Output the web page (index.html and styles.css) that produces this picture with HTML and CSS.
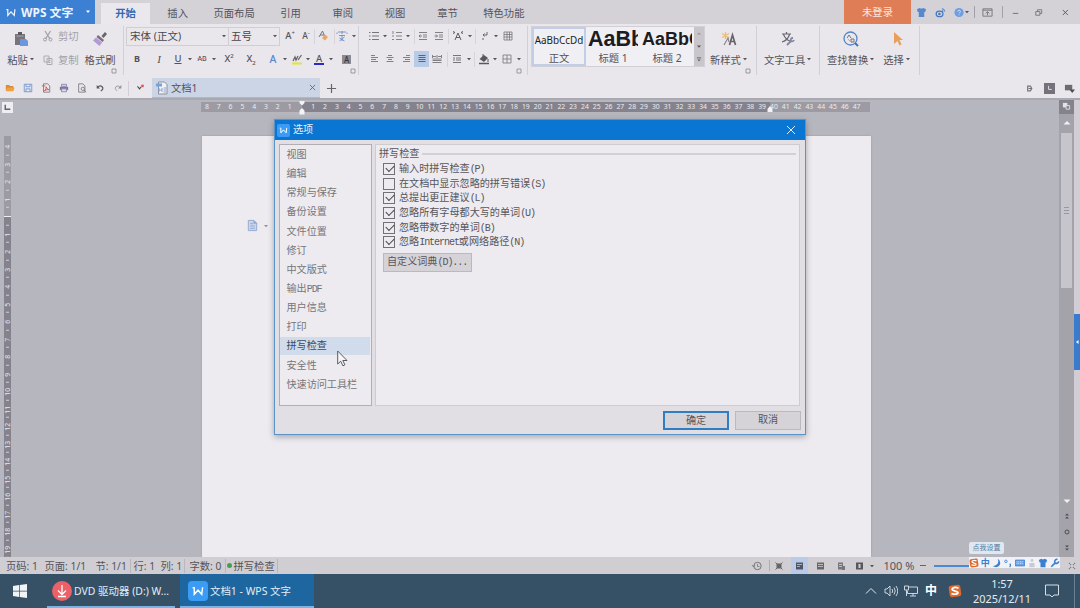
FILE: index.html
```html
<!DOCTYPE html>
<html lang="zh-CN">
<head>
    <meta charset="UTF-8">
    <meta name="viewport" content="width=device-width, initial-scale=1.0">
    <title>文档1 - WPS 文字</title>
    <link rel="stylesheet" href="styles.css">
</head>
<body>

    <svg class="defs">
        <symbol id="caret" viewBox="0 0 6 4"><path d="M1 1h4L3 3.2z" fill="#55545a"/></symbol>
        <symbol id="launch" viewBox="0 0 6 6"><path d="M1 1h4v4H1z" fill="none" stroke="#8a888e" stroke-width=".8"/></symbol>
        <symbol id="wlogo" viewBox="0 0 14 12"><path d="M.5 2H2.500v8L7 5l4.500 5 1-8.500" fill="none" stroke="currentColor" stroke-width="1.700"/></symbol>
        <symbol id="sogou" viewBox="0 0 12 12"><rect x="1" y="1" width="10" height="10" rx="2" transform="rotate(-8 6 6)" fill="#e06a2c"/><path d="M9 3.500C6 2.500 3.500 3 3.500 4.600S8.500 6 8.500 7.500 5.500 9 3 8.200" fill="none" stroke="#fff" stroke-width="1.500"/></symbol>
        <symbol id="shirt" viewBox="0 0 12 12"><path d="M1 2.500l3-1.500q2 1.500 4 0l3 1.500-1 3H9V11H3V5.500H2z"/></symbol>
    </svg>

    <header class="titlebar">
        <div class="brand">
            <svg class="brand-logo"><use href="#wlogo"/></svg>
            <b>WPS 文字</b>
            <svg class="brand-arrow" viewBox="0 0 6 4"><path d="M1 .5h4L3 3z" fill="#fff"/></svg>
        </div>
        <nav class="tabs">
            <span class="tab active">开始</span>
            <span class="tab">插入</span>
            <span class="tab wide">页面布局</span>
            <span class="tab">引用</span>
            <span class="tab">审阅</span>
            <span class="tab">视图</span>
            <span class="tab">章节</span>
            <span class="tab wide">特色功能</span>
        </nav>
        <div class="login">未登录</div>
        <div class="window-tools">
            <svg class="ic blue-fill" viewBox="0 0 12 12"><use href="#shirt"/></svg>
            <svg class="ic weibo" viewBox="0 0 12 12"><ellipse cx="5" cy="7.500" rx="3.700" ry="3" fill="none" stroke="#4179c2" stroke-width="1.400"/><circle cx="4.800" cy="7.600" r="1.400" fill="#4179c2"/><path d="M7.500 2q3-.5 3 3M7.800 3.800q1.200 0 1 1.200" fill="none" stroke="#4179c2"/></svg>
            <svg class="ic help" viewBox="0 0 12 12"><circle cx="5.500" cy="6" r="5" fill="#6e9ee2"/><path d="M4 5q0-1.500 1.500-1.500T7 5t-1.500 1.500M5.500 8v1" fill="none" stroke="#c9dcf6"/></svg>
            <svg class="caret"><use href="#caret"/></svg>
            <i class="tool-sep"></i>
            <svg class="ic tool-up" viewBox="0 0 12 12"><path d="M1 2h10v8H1zM1 3.500h10M6 9V5.500M4 7l2-2 2 2" fill="none" stroke="#77757b"/></svg>
            <i class="tool-sep far"></i>
            <svg class="ic win-min" viewBox="0 0 12 12"><path d="M3 7h6" stroke="#6f6d73"/></svg>
            <svg class="ic win-res" viewBox="0 0 12 12"><path d="M3 5h4.500v4H3zM5 5V3h4.500v4H7.500" fill="none" stroke="#6f6d73" stroke-width=".9"/></svg>
            <svg class="ic win-close" viewBox="0 0 12 12"><path d="M3 3.200l5.600 5.600M8.600 3.200L3 8.800" stroke="#59575d"/></svg>
        </div>
    </header>

    <section class="ribbon">
        <div class="group clip">
            <div class="big paste">
                <svg class="big-icon" viewBox="0 0 16 16"><path d="M2 3h10v11H2z" fill="#77747c"/><path d="M5 1h4v3H5z" fill="#5c5a62"/><path d="M3.500 5h7" stroke="#aaa8af"/><path d="M7 8h6l2 2v5H7z" fill="#6b97dc"/></svg>
                <span>粘贴<svg class="caret"><use href="#caret"/></svg></span>
            </div>
            <div class="small-stack">
                <span><svg class="ic" viewBox="0 0 12 12"><path d="M3 1l5 8M8.500 1l-5 8" stroke="#a19fa6" stroke-width="1.200"/><circle cx="3" cy="9.500" r="1.500" fill="none" stroke="#a19fa6"/><circle cx="8.500" cy="9.500" r="1.500" fill="none" stroke="#a19fa6"/></svg>剪切</span>
                <span><svg class="ic" viewBox="0 0 12 12"><path d="M2 2h5v6H2zM5 4.500h5v6H5zM6.500 6.500h2M6.500 8.500h2" fill="#e9e7eb" stroke="#acaab0"/></svg>复制</span>
            </div>
            <div class="big brush">
                <svg class="big-icon" viewBox="0 0 16 16"><path d="M9.500 5l3.500-4 2 2-3.500 4z" fill="#68636c"/><path d="M6 4l6 5-1.500 2-6-5z" fill="#777079"/><path d="M4 6.500l6.200 5L7.500 15 1 9.500z" fill="#b29ad9"/></svg>
                <span>格式刷</span>
            </div>
            <svg class="launch"><use href="#launch"/></svg>
        </div>

        <div class="group font">
            <div class="row font-row1">
                <div class="combo family">宋体 (正文)<svg class="caret"><use href="#caret"/></svg></div>
                <div class="combo size">五号<svg class="caret"><use href="#caret"/></svg></div>
                <span class="glyph g3">A<sup>+</sup></span>
                <span class="glyph g2 shrink">A<sup>-</sup></span>
                <i class="mini-sep g1"></i>
                <svg class="ic g2" viewBox="0 0 12 12"><path d="M2 7l3.500-6L8 7M3 5h4" fill="none" stroke="#77757b"/><path d="M5 8l3-3.500 3 2.500-3 3.500z" fill="#e7a66c"/></svg>
                <i class="mini-sep g5"></i>
                <svg class="ic g1" viewBox="0 0 12 12"><path d="M2 2h8M6 1v3M1 4V2.500M11 4V2.500M3 5.500h6M6 5v6M3.500 8l5 3M8.500 7l-5 4" fill="none" stroke="#6d8fc4" stroke-width=".9"/></svg>
                <svg class="caret g3"><use href="#caret"/></svg>
            </div>
            <div class="row font-row2">
                <span class="glyph bold">B</span>
                <span class="glyph ital g8">I</span>
                <span class="glyph under g5">U</span>
                <svg class="caret g2"><use href="#caret"/></svg>
                <span class="glyph strike g2">AB</span>
                <svg class="caret g2"><use href="#caret"/></svg>
                <span class="glyph g5">X<sup>2</sup></span>
                <span class="glyph g8">X<sub>2</sub></span>
                <span class="glyph outline g8">A</span>
                <svg class="caret g2"><use href="#caret"/></svg>
                <svg class="ic g3" viewBox="0 0 12 12"><path d="M1 9.500h10v2H1z" fill="#e4e52c"/><path d="M2 8l2-4 1 3 2-4M7 7l3.500-5" stroke="#67656b" fill="none" stroke-width="1.300"/></svg>
                <svg class="caret g2"><use href="#caret"/></svg>
                <span class="glyph fontcolor g3">A</span>
                <svg class="caret g4"><use href="#caret"/></svg>
                <span class="glyph shade g8">A</span>
            </div>
            <svg class="launch"><use href="#launch"/></svg>
        </div>

        <div class="group para">
            <div class="row">
                <svg class="ic" viewBox="0 0 12 12"><path d="M4 2.500h7M4 6h7M4 9.500h7M1 2.500h1.500M1 6h1.500M1 9.500h1.500" stroke="#77757b"/></svg>
                <svg class="caret g2"><use href="#caret"/></svg>
                <svg class="ic g3" viewBox="0 0 12 12"><path d="M5 2.500h6M5 6h6M5 9.500h6M2 1v3M1 6h2M1 9.500h2" stroke="#85838a"/></svg>
                <svg class="caret g2"><use href="#caret"/></svg>
                <i class="mini-sep g3"></i>
                <svg class="ic g2" viewBox="0 0 12 12"><path d="M2 2.500h8M6 5h4M6 7h4M2 9.500h8M5 6H2M3.500 4.500L2 6l1.500 1.500" fill="none" stroke="#77757b" stroke-width=".9"/></svg>
                <svg class="ic g4" viewBox="0 0 12 12"><path d="M2 2.500h8M6 5h4M6 7h4M2 9.500h8M1.500 6h3M3 4.500L4.500 6 3 7.500" fill="none" stroke="#77757b" stroke-width=".9"/></svg>
                <i class="mini-sep g3"></i>
                <svg class="ic g3" viewBox="0 0 12 12"><path d="M3 10l3-7 3 7M4 7.500h4M1 1.500l2 1-2 1M11 1.500l-2 1 2 1" fill="none" stroke="#5f5d63"/></svg>
                <svg class="caret g3"><use href="#caret"/></svg>
                <i class="mini-sep g2"></i>
                <svg class="ic g3" viewBox="0 0 12 12"><path d="M8 2v3H4M5.500 3.500L4 5l1.500 1.500M3 9h2" fill="none" stroke="#67656b"/></svg>
                <svg class="caret g2"><use href="#caret"/></svg>
                <svg class="ic g3" viewBox="0 0 12 12"><path d="M2 2h8v8H2zM2 4.500h8M2 7h8M5 2v8M7.500 2v8" fill="none" stroke="#77757b" stroke-width=".8"/></svg>
            </div>
            <div class="row">
                <svg class="ic" viewBox="0 0 12 12"><path d="M3 2.500h4M3 4.500h7M3 6.500h5M3 8.500h7" stroke="#77757b" stroke-width=".9"/></svg>
                <svg class="ic g4" viewBox="0 0 12 12"><path d="M4 2.500h4M2.500 4.500h7M4 6.500h4M2.500 8.500h7" stroke="#77757b" stroke-width=".9"/></svg>
                <svg class="ic g4" viewBox="0 0 12 12"><path d="M6 2.500h4M3 4.500h7M5 6.500h5M3 8.500h7" stroke="#77757b" stroke-width=".9"/></svg>
                <span class="pressed g2"><svg class="ic" viewBox="0 0 12 12"><path d="M2.500 2.500h7M2.500 4.500h7M2.500 6.500h7M2.500 8.500h7" stroke="#55647c"/></svg></span>
                <svg class="ic g2" viewBox="0 0 12 12"><path d="M1.500 2v3M10.500 2v3M2 3.500h3M7 3.500h3M6 2v3M1.500 6h9M1.500 7.500h9M1.500 9.500h9" stroke="#77757b" stroke-width=".9"/></svg>
                <i class="mini-sep g4"></i>
                <svg class="ic g3" viewBox="0 0 12 12"><path d="M2 2.500h8M5 5h5M5 7h5M2 9.500h8M3 4v4" stroke="#77757b"/></svg>
                <svg class="caret g3"><use href="#caret"/></svg>
                <i class="mini-sep g2"></i>
                <svg class="ic g3" viewBox="0 0 12 12"><path d="M6 2L1.500 6 6 9l4-4z" fill="#59575d"/><path d="M1 10.500h10" stroke="#59575d" stroke-width="1.500"/><path d="M5 1v3M10 6v3" stroke="#59575d"/></svg>
                <svg class="caret g2"><use href="#caret"/></svg>
                <svg class="ic g3" viewBox="0 0 12 12"><path d="M2 2h8v8H2zM2 6h8M6 2v8" fill="none" stroke="#77757b" stroke-width=".8"/></svg>
                <svg class="caret g3"><use href="#caret"/></svg>
            </div>
            <svg class="launch"><use href="#launch"/></svg>
        </div>

        <div class="group styles">
            <div class="gallery">
                <div class="style-item selected"><div class="sample">AaBbCcDd</div><span>正文</span></div>
                <div class="style-item"><div class="sample h1">AaBb</div><span>标题 1</span></div>
                <div class="style-item"><div class="sample h2">AaBbC</div><span>标题 2</span></div>
                <div class="gallery-scroll">
                    <svg viewBox="0 0 6 4"><path d="M1 3h4L3 1z" fill="#9a989e"/></svg>
                    <svg><use href="#caret"/></svg>
                    <svg viewBox="0 0 6 6"><path d="M.5 1h5" stroke="#55545a"/><path d="M1 3h4L3 5z" fill="#55545a"/></svg>
                </div>
            </div>
            <div class="big newstyle">
                <svg class="big-icon" viewBox="0 0 16 16"><path d="M4.500 1v7M1 2.500l7 4.500M1 6.500l7-4" stroke="#edbd72" stroke-width="1.300"/><path d="M8.500 14l3-10 3 10M9.500 10.500h4" fill="none" stroke="#67656b" stroke-width="1.700"/><path d="M3 14l4-7 1 4" fill="none" stroke="#8a8890" stroke-width="1.200"/></svg>
                <span>新样式<svg class="caret"><use href="#caret"/></svg></span>
            </div>
            <svg class="launch"><use href="#launch"/></svg>
        </div>

        <div class="group tools">
            <div class="big">
                <svg class="big-icon" viewBox="0 0 16 16"><path d="M2 3h9M6.500 1v2M3.500 3.500Q6 9 10 10M9.500 3.500Q8 9 2 11" fill="none" stroke="#68666d" stroke-width="1.200"/><path d="M7 14l4-4a2 2 0 0 1 2-3M11 10a2 2 0 0 0 3-1" fill="none" stroke="#8287a0" stroke-width="1.800"/></svg>
                <span>文字工具<svg class="caret"><use href="#caret"/></svg></span>
            </div>
        </div>

        <div class="group edit">
            <div class="big">
                <svg class="big-icon" viewBox="0 0 16 16"><circle cx="7.500" cy="7.500" r="6.500" fill="none" stroke="#5088cb" stroke-width="1.300"/><path d="M12 12l3 3" stroke="#3f74b8" stroke-width="2"/><path d="M4 7l2-3 2 3M8 8h3v3H8z" fill="none" stroke="#77757b"/><path d="M5 8q1 2 2.500 2" fill="none" stroke="#dfa467"/></svg>
                <span>查找替换<svg class="caret"><use href="#caret"/></svg></span>
            </div>
            <div class="big select">
                <svg class="big-icon" viewBox="0 0 16 16"><path d="M5 1l9 8H10.500l2 4.500-2 1-2-4.500L5 13z" fill="#e7a05b"/></svg>
                <span>选择<svg class="caret"><use href="#caret"/></svg></span>
            </div>
        </div>
    </section>

    <section class="docbar">
        <div class="quick">
            <svg class="ic" viewBox="0 0 12 12"><path d="M1 2.500h4l1 1h4V6H3l-2 4z" fill="#d98b35"/><path d="M3 5.500h8.500L10 10H1z" fill="#f0a03e"/></svg>
            <svg class="ic" viewBox="0 0 12 12"><path d="M1.500 1.500h9v9h-9zM3.500 1.500v3h5v-3M3.500 10.500V7h5v3.500" fill="none" stroke="#6b93cf"/></svg>
            <svg class="ic" viewBox="0 0 12 12"><path d="M3 1h5l2.500 2.500V11H3z" fill="none" stroke="#77757b"/><path d="M1 3.500h4M4 9.500q3-2 2-5 1 3 3.500 3.500-3-.5-5.500 1.500" fill="none" stroke="#cf4f4f"/></svg>
            <svg class="ic" viewBox="0 0 12 12"><path d="M1 4.500h10v4H1z" fill="#7b7996"/><path d="M3 1.500h6V4H3zM3 7h6v3.500H3z" fill="#d9d8e8" stroke="#8682ae"/></svg>
            <svg class="ic" viewBox="0 0 12 12"><path d="M2 1h5l2.500 2.500V11H2z" fill="none" stroke="#77757b"/><circle cx="7" cy="7" r="2" fill="#e9e7eb" stroke="#77757b"/><path d="M8.500 8.500L11 11" stroke="#77757b"/></svg>
            <svg class="ic" viewBox="0 0 12 12"><path d="M3.500 5Q6 2 8.500 4.500T7 9.500" fill="none" stroke="#5b595f" stroke-width="1.500"/><path d="M2 2.500v4h4z" fill="#5b595f"/></svg>
            <svg class="ic" viewBox="0 0 12 12"><path d="M8.500 5Q6 2 3.500 4.500T5 9.500" fill="none" stroke="#929097"/><path d="M10 2.500v4H6z" fill="#929097"/></svg>
            <i class="quick-sep"></i>
            <svg class="ic" viewBox="0 0 12 12"><path d="M3 4l2.500 3 2-2.500" fill="none" stroke="#49474d" stroke-width="1.300"/><path d="M7.500 2h3v3h-3z" fill="#e05454"/></svg>
        </div>
        <div class="doc-tab">
            <svg class="doc-icon" viewBox="0 0 12 14"><path d="M3 1h6l2.500 2.500V13H3z" fill="#f2f2f6" stroke="#8b919e"/><path d="M.5 2.500h6v3h-6z" fill="#75a2d8"/><path d="M3.500 7v4M6.500 7v4M3.500 9h3M8 7h2.500M8 9h2.500M8 11h2.500" stroke="#7aa0cd" stroke-width=".9"/></svg>
            <span>文档1</span>
            <svg class="tab-close" viewBox="0 0 8 8"><path d="M1 1l6 6M7 1L1 7" stroke="#66646c"/></svg>
        </div>
        <svg class="tab-add" viewBox="0 0 12 12"><path d="M1 6h10M6 1v10" stroke="#66646a" stroke-width="1.300"/></svg>
        <div class="doc-tools">
            <svg class="ic" viewBox="0 0 12 12"><path d="M4 3.500h3l1.500 2.500L7 8.500H4z" fill="none" stroke="#77757b" stroke-width="1.300"/><path d="M5 6h3" stroke="#66646a"/></svg>
            <svg class="ic" viewBox="0 0 12 12"><path d="M0 0h12v12H0z" fill="#74727a"/><path d="M5 3v4h3.500" fill="none" stroke="#e9e7eb"/></svg>
            <svg class="ic" viewBox="0 0 12 12"><path d="M1 2h8v6H1z" fill="#6d6b72"/><path d="M6 7h6l-3 4z" fill="#4f4d53"/></svg>
        </div>
    </section>

    <main class="workspace">
        <div class="left-rail">
            <div class="tab-type"><svg viewBox="0 0 8 8"><path d="M2 1.500v4h4.500" fill="none" stroke="#66646a" stroke-width="1.300"/></svg></div>
            <div class="v-ruler" id="vRuler"></div>
        </div>
        <div class="doc-area">
            <div class="h-ruler" id="hRuler">
                <svg class="indent first" viewBox="0 0 6 14"><path d="M.5 0h5v2L3 4.500.5 2zM3 7l2.500 2.500v4h-5v-4z" fill="#f4f3f6"/></svg>
                <svg class="indent last" viewBox="0 0 6 14"><path d="M3 5l2.500 3v3h-5V8z" fill="#f4f3f6"/></svg>
            </div>
            <div class="page">
                <svg class="para-icon" viewBox="0 0 12 14"><path d="M1.500 1.500h6l3 3v8h-9z" fill="#cbd6ea" stroke="#91a7d0"/><path d="M3.500 5h3M3.500 7.500h5M3.500 10h5" stroke="#91a7d0"/><path d="M7 1l4 4H7z" fill="#91a7d0"/></svg>
                <svg class="caret"><use href="#caret"/></svg>
            </div>
        </div>
        <div class="scrollbar">
            <div class="nav-box"><svg viewBox="0 0 10 10"><path d="M1 1h5v5H1z" fill="#e2e1e6"/><path d="M4.500 4h4v4h-4z" fill="#85838b" stroke="#e2e1e6"/></svg></div>
            <svg class="arrow" viewBox="0 0 8 5"><path d="M.5 4.500L4 1l3.500 3.500z" fill="#f0eff3"/></svg>
            <div class="thumb"><i></i><i></i><i></i></div>
            <svg class="arrow down" viewBox="0 0 8 5"><path d="M.5.5L4 4 7.500.5z" fill="#f0eff3"/></svg>
            <div class="jump">
                <svg viewBox="0 0 6 6"><path d="M1 2.500L3 .5l2 2zM1 5.500l2-2 2 2z" fill="#4d4b52"/></svg>
                <svg viewBox="0 0 6 6"><circle cx="3" cy="3" r="2" fill="none" stroke="#4d4b52"/></svg>
                <svg viewBox="0 0 6 6"><path d="M1 .5l2 2 2-2zM1 3.500l2 2 2-2z" fill="#4d4b52"/></svg>
            </div>
        </div>
        <div class="side-strip"><div class="side-handle"><svg viewBox="0 0 4 6"><path d="M3.500 1v4L1 3z" fill="#fff"/></svg></div></div>
    </main>

    <footer class="statusbar">
        <span class="st-page">页码: 1</span>
        <span class="st-face">页面: 1/1</span>
        <span class="st-sec">节: 1/1</span>
        <span class="st-row">行: 1</span>
        <span class="st-col">列: 1</span>
        <span class="st-words">字数: 0</span>
        <span class="st-spell"><i class="dot"></i>拼写检查</span>
        <div class="view-tools">
            <svg class="ic" viewBox="0 0 12 12"><circle cx="6.500" cy="6" r="3.700" fill="none" stroke="#77757b"/><path d="M6.500 4v2.500h2M1 5l1.500 2L4 5" fill="none" stroke="#77757b" stroke-width=".8"/></svg>
            <i class="view-sep"></i>
            <svg class="ic full" viewBox="0 0 12 12"><path d="M4 4h4v4H4zM2.500 2.500l2 2M9.500 2.500l-2 2M2.500 9.500l2-2M9.500 9.500l-2-2" fill="#66646a" stroke="#66646a"/></svg>
            <span class="view-on"><svg class="ic" viewBox="0 0 12 12"><path d="M3 2.500h7v7H3z" fill="#4e5665"/><path d="M4 4.500h5M4 6.500h3" stroke="#b7c7de" stroke-width=".8"/></svg></span>
            <svg class="ic web" viewBox="0 0 12 12"><path d="M3 2.500h7v7H3z" fill="#68666d"/><path d="M4 4.500h5M4 6.500h5" stroke="#d0ced2" stroke-width=".8"/></svg>
            <svg class="ic read" viewBox="0 0 12 12"><path d="M3 2.500h5v7H3zM7 6h3v4H7z" fill="#77757c"/><path d="M4 4.500h3M4 6.500h3" stroke="#d0ced2" stroke-width=".8"/></svg>
            <svg class="ic fit" viewBox="0 0 12 12"><path d="M3 2.500h7v7H3z" fill="#59575e"/><path d="M5.500 4h2v4h-2z" fill="#d0ced2"/></svg>
            <svg class="caret"><use href="#caret"/></svg>
        </div>
        <span class="zoom">100 %</span>
        <i class="zoom-minus"></i>
        <i class="zoom-line"></i>
        <svg class="resize" viewBox="0 0 8 8"><path d="M1 1l2 2M7 1L5 3M1 7l2-2M7 7L5 5" stroke="#77757b" stroke-width="1.200" stroke-dasharray="1 .8"/></svg>
    </footer>

    <div class="taskbar">
        <svg class="start" viewBox="0 0 14 14"><path d="M0 2l6-.9v5.600H0zM6.700 1L14 0v6.700H6.700zM0 7.400h6V13l-6-.9zM6.700 7.400H14V14l-7.300-.9z" fill="#f1f4f7"/></svg>
        <div class="task dvd">
            <svg class="task-icon" viewBox="0 0 20 20"><circle cx="10" cy="10" r="10" fill="#ec6068"/><path d="M10 4v9M6 9.500l4 4 4-4M6 15.500h8" fill="none" stroke="#fff" stroke-width="1.300"/></svg>
            <span>DVD 驱动器 (D:) W...</span>
        </div>
        <div class="task wps">
            <div class="task-logo"><svg><use href="#wlogo"/></svg></div>
            <span>文档1 - WPS 文字</span>
        </div>
        <div class="tray">
            <svg class="tray-up" viewBox="0 0 12 8"><path d="M1 6.500L6 1.500l5 5" fill="none" stroke="#e1e7ec"/></svg>
            <svg class="tray-vol" viewBox="0 0 14 12"><path d="M1 4h2l3-3v10L3 8H1zM8 4q1.500 2 0 4M10 2.500q2.500 3.500 0 7M12 1q3.500 5 0 10" fill="none" stroke="#dce3e9" stroke-width=".9"/></svg>
            <svg class="tray-net" viewBox="0 0 14 12"><path d="M5 2h8.500v6.500H3.500V6M9 8.500V11M6 11h6M.5 1h4v4h-4zM2.500 5v6" fill="none" stroke="#dce3e9" stroke-width=".9"/></svg>
            <b>中</b>
            <svg class="tray-sogou"><use href="#sogou"/></svg>
            <div class="clock"><span>1:57</span><span>2025/12/11</span></div>
            <svg class="tray-note" viewBox="0 0 14 14"><path d="M.5 1h13v10H9L7 13l-2-2H.5z" fill="none" stroke="#d6dfe6"/></svg>
        </div>
    </div>

    <div class="dialog">
        <div class="dialog-title">
            <div class="dialog-logo"><svg><use href="#wlogo"/></svg></div>
            <span>选项</span>
            <svg class="dialog-close" viewBox="0 0 10 10"><path d="M1 1l8 8M9 1L1 9" stroke="#e3eefa"/></svg>
        </div>
        <div class="dialog-body">
            <ul class="option-list">
                <li>视图</li>
                <li>编辑</li>
                <li>常规与保存</li>
                <li>备份设置</li>
                <li>文件位置</li>
                <li>修订</li>
                <li>中文版式</li>
                <li>输出<span class="en">PDF</span></li>
                <li>用户信息</li>
                <li>打印</li>
                <li class="current">拼写检查</li>
                <li>安全性</li>
                <li>快速访问工具栏</li>
            </ul>
            <div class="option-panel">
                <div class="legend">拼写检查</div>
                <div class="check on"><i></i><span>输入时拼写检查<span class="en">(P)</span></span></div>
                <div class="check"><i></i><span>在文档中显示忽略的拼写错误<span class="en">(S)</span></span></div>
                <div class="check on"><i></i><span>总提出更正建议<span class="en">(L)</span></span></div>
                <div class="check on"><i></i><span>忽略所有字母都大写的单词<span class="en">(U)</span></span></div>
                <div class="check on"><i></i><span>忽略带数字的单词<span class="en">(B)</span></span></div>
                <div class="check on"><i></i><span>忽略<span class="en">Internet</span>或网络路径<span class="en">(N)</span></span></div>
                <button class="dict">自定义词典<span class="en">(D)...</span></button>
            </div>
        </div>
        <div class="dialog-buttons">
            <button class="ok">确定</button>
            <button>取消</button>
        </div>
    </div>

    <svg class="cursor" viewBox="0 0 11 17"><path d="M.7 1v13l3-2.800 2.200 4.600 2-1-2.100-4.300h4.200z" fill="#f6f5f8" stroke="#4b4950" stroke-width=".9"/></svg>

    <div class="ime-tip">点我设置</div>
    <div class="ime-bar">
        <svg><use href="#sogou"/></svg>
        <b>中</b>
        <svg viewBox="0 0 12 12"><path d="M8 1q3 7-6 9 7 3 9-3 .5-4-3-6z" fill="#3a7fd0"/></svg>
        <svg viewBox="0 0 12 12"><circle cx="3.500" cy="4" r="1.500" fill="none" stroke="#3a7fd0"/><path d="M8 7q2 1 0 4" fill="none" stroke="#3a7fd0" stroke-width="1.500"/></svg>
        <svg viewBox="0 0 12 12"><path d="M.5 2.500h11v7H.5z" fill="#70a3dd" stroke="#3a7fd0"/><path d="M2 4.500h8M2 6.500h8" stroke="#e9f1fa" stroke-dasharray="1 1"/></svg>
        <svg viewBox="0 0 12 12"><circle cx="6" cy="3" r="1.700" fill="#c9cbd2"/><path d="M3 11V6h6v5z" fill="#c9cbd2"/></svg>
        <svg class="ime-shirt" viewBox="0 0 12 12"><use href="#shirt"/></svg>
        <svg viewBox="0 0 12 12"><path d="M1.500 10.500l5-5M6 6a3 3 0 0 1 3-4.500M6 6a3 3 0 0 0 4.500-2" fill="none" stroke="#3a7fd0" stroke-width="2"/></svg>
    </div>

    <script src="script.js"></script>
</body>
</html>
```
FILE: styles.css
```css
* {
    box-sizing: border-box;
}
body {
    margin: 0;
    width: 1080px;
    height: 608px;
    overflow: hidden;
    position: relative;
    display: flex;
    flex-direction: column;
    font-family: "Noto Sans", "Noto Sans CJK SC", sans-serif;
    font-size: 10.3px;
    line-height: 14px;
    color: #55535a;
    background: #b6b6bf;
}
svg {
    display: block;
    flex: none;
}
i {
    flex: none;
}
.defs {
    position: absolute;
    width: 0;
    height: 0;
}
.ic {
    width: 12px;
    height: 12px;
}
.caret {
    width: 6px;
    height: 4px;
}

/* title bar */
.titlebar {
    height: 24px;
    flex: none;
    display: flex;
    background: #d4d1d7;
}
.brand {
    width: 95px;
    display: flex;
    align-items: center;
    background: #3c80d4;
    color: #eef5ff;
    font-size: 11.900px;
    white-space: nowrap;
}
.brand-logo {
    width: 10px;
    height: 9px;
    margin: 0 5px 0 6px;
}
.brand b {
    width: 56px;
}
.brand-arrow {
    width: 6px;
    height: 4px;
    margin-left: 8px;
}
.tabs {
    display: flex;
    width: 749px;
    padding: 3px 0 0 6px;
}
.tab {
    width: 52.3px;
    height: 21px;
    line-height: 21px;
    text-align: center;
}
.tab.wide {
    width: 60.6px;
}
.tab.active {
    width: 49px;
    margin-right: 1.500px;
    background: #eae8ec;
    color: #2f6ab5;
    font-weight: bold;
}
.login {
    width: 67px;
    line-height: 25px;
    text-align: center;
    background: #df7d57;
    color: #fbe7df;
}
.window-tools {
    display: flex;
    align-items: center;
    padding-left: 5px;
}
.window-tools .ic {
    width: 11px;
    height: 11px;
}
.blue-fill {
    fill: #5488cf;
}
.weibo {
    margin-left: 8px;
}
.help {
    margin-left: 8px;
}
.window-tools .caret {
    margin-left: -1px;
}
.tool-sep {
    width: 1px;
    height: 12px;
    margin-left: 4px;
    background: #a3a1a8;
}
.tool-up {
    margin-left: 7px;
}
.tool-sep.far {
    margin-left: 9px;
}
.win-min {
    margin-left: 7px;
}
.win-res {
    margin-left: 12px;
}
.win-close {
    margin-left: 16px;
}

/* ribbon */
.ribbon {
    height: 54px;
    flex: none;
    display: flex;
    background: #e9e7eb;
}
.group {
    position: relative;
    height: 49px;
    margin-top: 2px;
    border-right: 1px solid #d2d0d6;
    display: flex;
}
.launch {
    position: absolute;
    right: 2px;
    bottom: 1px;
    width: 6px;
    height: 6px;
}
.big {
    display: flex;
    flex-direction: column;
    align-items: center;
    padding-top: 5px;
}
.big-icon {
    width: 16px;
    height: 16px;
}
.big span {
    display: flex;
    align-items: center;
    margin-top: 6px;
    white-space: nowrap;
}
.big .caret {
    margin-left: 1px;
    margin-bottom: 2px;
}
.clip {
    width: 124px;
}
.paste {
    width: 28px;
    margin-left: 7px;
}
.paste .big-icon {
    margin-right: 1px;
}
.small-stack {
    display: flex;
    flex-direction: column;
    gap: 10px;
    margin: 3px 0 0 7px;
    color: #a2a0a7;
}
.small-stack span {
    display: flex;
    align-items: center;
    gap: 4px;
}
.brush {
    margin-left: 6px;
}
.clip .launch {
    right: 6px;
}

.font {
    width: 235px;
    flex-direction: column;
}
.row {
    height: 20px;
    display: flex;
    align-items: center;
}
.font-row1 {
    margin-left: 2px;
}
.combo {
    height: 19px;
    display: flex;
    align-items: center;
    justify-content: space-between;
    border: 1px solid #d0ced4;
    padding: 0 1px 0 3px;
    font-size: 10.5px;
    color: #49474e;
}
.family {
    width: 103px;
}
.size {
    width: 51px;
    border-left: 0;
    padding-left: 2px;
}
.glyph {
    width: 14px;
    text-align: center;
    font-size: 9.5px;
    line-height: 12px;
    font-weight: 500;
    white-space: nowrap;
}
.glyph sup, .glyph sub {
    font-size: 6px;
    line-height: 0;
}
.g1 { margin-left: 1px; }
.g2 { margin-left: 2px; }
.g3 { margin-left: 3px; }
.g4 { margin-left: 4px; }
.g5 { margin-left: 5px; }
.g8 { margin-left: 8px; }
.shrink {
    font-size: 8.5px;
}
.mini-sep {
    width: 1px;
    height: 15px;
    background: #d6d4da;
}
.font-row2 {
    margin: 3px 0 0 6px;
}
.glyph.bold {
    font-weight: bold;
    font-size: 9px;
}
.ital {
    font-family: "Liberation Serif", serif;
    font-style: italic;
    font-size: 11px;
}
.under {
    text-decoration: underline;
}
.strike {
    font-size: 7px;
    text-decoration: line-through #d49494;
}
.outline {
    color: #5a86cb;
    font-size: 10.5px;
}
.fontcolor {
    width: 10px;
    height: 11px;
    line-height: 9px;
    border-bottom: 2px solid #2a2ac8;
}
.shade {
    width: 9px;
    height: 9px;
    line-height: 9px;
    font-size: 8px;
    background: #8d8b92;
    color: #37353b;
}

.para {
    width: 169px;
    flex-direction: column;
    padding-left: 9px;
}
.para .row + .row {
    margin-top: 3px;
}
.para .launch {
    right: 5px;
}
.pressed {
    width: 15px;
    height: 16px;
    padding: 2px 1.500px;
    background: #b7cbe8;
}

.styles {
    width: 229px;
}
.gallery {
    width: 174px;
    height: 41px;
    margin-left: 3px;
    display: flex;
    border: 1px solid #d2d0d6;
    background: #f0eff3;
}
.style-item {
    width: 54px;
    height: 39px;
    text-align: center;
    overflow: hidden;
}
.style-item.selected {
    border: 2px solid #c1cee6;
}
.style-item span {
    display: block;
    line-height: 12px;
}
.sample {
    height: 25px;
    padding: 0 2px;
    overflow: hidden;
    line-height: 25px;
    text-align: left;
    white-space: nowrap;
    color: #1d1c20;
}
.selected .sample {
    height: 23px;
    padding: 0;
    line-height: 23px;
    text-align: center;
    font-size: 9.9px;
}
.sample.h1 {
    font: bold 21.500px/25px "Liberation Sans", sans-serif;
    width: 52px;
}
.sample.h2 {
    font: bold 18px/25px "Liberation Sans", sans-serif;
    width: 52px;
}
.gallery-scroll {
    width: 10px;
    height: 39px;
    display: flex;
    flex-direction: column;
    align-items: center;
    justify-content: space-around;
    background: #c8c6cb;
}
.gallery-scroll svg {
    width: 6px;
    height: 5px;
}
.newstyle {
    margin-left: 5px;
}
.styles .launch {
    right: 5px;
}
.tools {
    width: 63px;
    padding-left: 7px;
}
.edit {
    width: 100px;
    padding-left: 7px;
}
.select {
    margin-left: 8px;
}

/* quick access and document tab */
.docbar {
    height: 20px;
    flex: none;
    display: flex;
    align-items: center;
    background: #e9e7eb;
}
.quick {
    width: 152px;
    display: flex;
    align-items: center;
    gap: 8px;
    padding-left: 5px;
}
.quick .ic {
    width: 10px;
    height: 10px;
}
.quick-sep {
    width: 1px;
    height: 15px;
    margin: 0 -2px 0 -3px;
    background: #d2d0d6;
}
.doc-tab {
    width: 168px;
    height: 20px;
    display: flex;
    align-items: center;
    background: #cbd5e5;
    border-bottom: 1px solid #a6bad6;
    padding: 0 4px 0 3px;
}
.doc-icon {
    width: 13px;
    height: 14px;
    margin-right: 3px;
}
.doc-tab span {
    flex: 1;
}
.tab-close {
    width: 7px;
    height: 7px;
}
.tab-add {
    width: 11px;
    height: 11px;
    margin-left: 6px;
}
.doc-tools {
    display: flex;
    gap: 9px;
    margin-left: auto;
    padding-right: 5px;
}
.doc-tools .ic {
    width: 11px;
    height: 11px;
}

/* workspace */
.workspace {
    height: 459px;
    flex: none;
    display: flex;
    border-top: 2px solid #a9a9b2;
}
.left-rail {
    width: 201px;
    padding: 2px 0 0 2px;
}
.tab-type {
    width: 11px;
    height: 11px;
    background: #eeedf1;
    padding: 1px;
}
.tab-type svg {
    width: 9px;
    height: 9px;
}
.v-ruler {
    width: 7px;
    height: 421px;
    margin: 23px 0 0 2px;
    padding-top: 6px;
    overflow: hidden;
    background: linear-gradient(#9c9ba4 80px, #efeef2 80px, #efeef2 81px, #84838d 81px);
}
.v-ruler span {
    width: 7px;
    height: 8.750px;
    display: flex;
    align-items: center;
    justify-content: center;
    writing-mode: vertical-rl;
    transform: rotate(180deg);
    font-size: 6.800px;
    line-height: 7px;
    color: #e9e8ed;
}
.v-ruler .tick::before {
    content: "";
    width: 3px;
    height: 1px;
    background: #cfced5;
}
.doc-area {
    width: 858px;
}
.h-ruler {
    position: relative;
    width: 669px;
    height: 10px;
    margin-top: 2px;
    display: flex;
    background: linear-gradient(90deg, #9c9ba4 101px, #84838d 101px, #84838d 569px, #9c9ba4 569px);
}
.h-ruler span {
    width: 11.820px;
    flex: none;
    text-align: center;
    font-size: 6.800px;
    line-height: 10px;
    color: #ecebf0;
}
.indent {
    position: absolute;
    top: -1px;
    width: 6px;
    height: 14px;
}
.indent.first {
    left: 98px;
}
.indent.last {
    left: 566px;
}
.page {
    width: 669px;
    height: 421px;
    margin: 24px 0 0 1px;
    padding: 83px 0 0 44px;
    display: flex;
    align-items: flex-start;
    background: #edebef;
    box-shadow: 0 0 2px #9a99a3;
}
.para-icon {
    width: 13px;
    height: 13px;
}
.page .caret {
    margin: 5px 0 0 4px;
    opacity: .6;
}
.scrollbar {
    width: 15px;
    display: flex;
    flex-direction: column;
    align-items: center;
    background: #a4a3aa;
}
.nav-box {
    width: 15px;
    height: 14px;
    padding: 2px 3px;
    background: #84828a;
}
.nav-box svg {
    width: 9px;
    height: 9px;
}
.arrow {
    width: 8px;
    height: 5px;
    margin-top: 6px;
}
.thumb {
    width: 11px;
    height: 155px;
    margin-top: 8px;
    display: flex;
    flex-direction: column;
    align-items: center;
    justify-content: center;
    gap: 2px;
    background: #c6c5cc;
}
.thumb i {
    width: 5px;
    height: 1px;
    background: #98979f;
}
.arrow.down {
    margin-top: 211px;
}
.jump {
    display: flex;
    flex-direction: column;
    align-items: center;
    gap: 10px;
    width: 15px;
    height: 52px;
    margin-top: auto;
    padding-top: 8px;
}
.jump svg {
    width: 6px;
    height: 6px;
}
.side-strip {
    width: 6px;
    padding-top: 214px;
    background: #d0ced4;
}
.side-handle {
    height: 56px;
    display: flex;
    align-items: center;
    justify-content: center;
    background: #3a7ccb;
}
.side-handle svg {
    width: 4px;
    height: 6px;
}

/* status bar */
.statusbar {
    height: 17px;
    flex: none;
    display: flex;
    align-items: center;
    background: #d0ced2;
    white-space: nowrap;
    padding-left: 6px;
}
.st-page { width: 38.5px; }
.st-face { width: 51px; }
.st-sec {
    width: 35px;
    border-right: 1px solid #b9b7bd;
}
.st-row {
    width: 30px;
    padding-left: 3px;
}
.st-col {
    width: 24px;
    border-right: 1px solid #b9b7bd;
}
.st-words {
    width: 41px;
    padding-left: 5px;
    border-right: 1px solid #b9b7bd;
}
.st-spell {
    width: 52px;
    display: flex;
    align-items: center;
    border-right: 1px solid #b9b7bd;
}
.dot {
    width: 5px;
    height: 5px;
    margin: 0 2px 0 1px;
    border-radius: 50%;
    background: #43a04a;
}
.view-tools {
    display: flex;
    align-items: center;
    margin-left: 473px;
}
.view-sep {
    width: 1px;
    height: 11px;
    margin-left: 6px;
    background: #b0aeb4;
}
.full {
    margin: 0 6px 0 3px;
}
.view-on {
    width: 17px;
    height: 17px;
    padding: 3px 2px;
    background: #b9cbe7;
}
.web { margin-left: 6px; }
.read { margin-left: 9px; }
.fit { margin: 0 4px 0 6px; }
.zoom {
    width: 36px;
    margin-left: 9px;
    font-size: 11px;
}
.zoom-minus {
    width: 6px;
    height: 1px;
    background: #66646a;
}
.zoom-line {
    width: 36px;
    height: 2px;
    margin-left: 8px;
    background: #4c8bd3;
}
.resize {
    width: 8px;
    height: 8px;
    margin: 0 4px 0 auto;
}

/* taskbar */
.taskbar {
    height: 34px;
    flex: none;
    display: flex;
    align-items: center;
    padding-left: 13px;
    background: #365166;
    color: #e6ecf1;
    white-space: nowrap;
}
.start {
    width: 14px;
    height: 14px;
}
.task {
    height: 34px;
    display: flex;
    align-items: center;
    padding-top: 1px;
    border-bottom: 2px solid #79b4e4;
    font-size: 10.450px;
}
.task-icon {
    width: 20px;
    height: 20px;
}
.dvd {
    width: 128px;
    margin-left: 20px;
    padding-left: 5px;
    gap: 2px;
}
.wps {
    width: 134px;
    margin-left: 5px;
    padding-left: 8px;
    gap: 2px;
    background: #1e669f;
}
.task-logo {
    width: 20px;
    height: 20px;
    padding: 5px 4px;
    border-radius: 4px;
    background: #3b9cf6;
    color: #fff;
}
.task-logo svg {
    width: 12px;
    height: 10px;
}
.tray {
    width: 210px;
    height: 34px;
    display: flex;
    align-items: center;
    margin-left: auto;
    margin-right: 5px;
    border-right: 1px solid #6b8092;
}
.tray-up {
    width: 12px;
    height: 8px;
}
.tray-vol {
    width: 14px;
    height: 12px;
    margin-left: 7px;
}
.tray-net {
    width: 14px;
    height: 12px;
    margin-left: 6px;
}
.tray b {
    margin-left: 7px;
    font-size: 12px;
    color: #fff;
}
.tray-sogou {
    width: 14px;
    height: 14px;
    margin-left: 11px;
}
.clock {
    width: 60px;
    display: flex;
    flex-direction: column;
    align-items: center;
    margin-left: 10px;
    font-size: 10.900px;
    line-height: 15.5px;
}
.tray-note {
    width: 14px;
    height: 14px;
    margin-left: 13px;
}

/* options dialog */
.dialog {
    position: absolute;
    left: 274px;
    top: 119px;
    width: 532px;
    height: 316px;
    border: 1px solid #5a93c8;
    background: #e1dfe3;
    box-shadow: 0 2px 6px rgba(60, 60, 80, .4);
    font-family: "Liberation Mono", "Noto Sans CJK SC", monospace;
    font-size: 10.1px;
}
.dialog-title {
    height: 20px;
    display: flex;
    align-items: center;
    padding-left: 2px;
    background: #0a76d2;
    color: #e6f0fb;
}
.dialog-title span {
    padding-top: 2px;
}
.dialog-logo {
    width: 13px;
    height: 13px;
    padding: 3px 2px;
    margin-right: 3px;
    border-radius: 2px;
    background: #3b9cf6;
    color: #fff;
}
.dialog-logo svg {
    width: 9px;
    height: 7px;
}
.dialog-close {
    width: 10px;
    height: 10px;
    margin: 0 9px 0 auto;
}
.dialog-body {
    display: flex;
    gap: 3px;
    padding: 4px 5px 0 4px;
}
.option-list {
    width: 93px;
    height: 262px;
    margin: 0;
    padding: 0 1px 0 0;
    list-style: none;
    border: 1px solid #b1afb3;
    background: #edebef;
    color: #77757b;
}
.option-list li {
    height: 19.150px;
    line-height: 22px;
    padding-left: 6.500px;
}
.option-list .current {
    height: 18px;
    margin: 1px 0 .15px;
    line-height: 20px;
    background: #d0dbec;
    color: #3c4a61;
}
.option-panel {
    flex: 1;
    height: 262px;
    padding: 1px 3px 0 3px;
    border: 1px solid #cecccf;
    background: #edebef;
    color: #57555b;
}
.legend {
    display: flex;
    align-items: center;
    gap: 3px;
    height: 16px;
    line-height: 17px;
}
.legend::after {
    content: "";
    flex: 1;
    height: 2px;
    background: #d2d0d4;
}
.en {
    letter-spacing: -1.100px;
}
.check {
    height: 14.600px;
    display: flex;
    align-items: center;
    padding-left: 4px;
    white-space: nowrap;
}
.check > span {
    padding-top: 2px;
}
.check i {
    position: relative;
    width: 12px;
    height: 12px;
    margin-right: 4px;
    border: 1px solid #737177;
}
.check.on i::after {
    content: "";
    position: absolute;
    left: 2px;
    top: 1px;
    width: 7px;
    height: 4px;
    border-left: 1.500px solid #444248;
    border-bottom: 1.500px solid #444248;
    transform: rotate(-45deg);
}
.dialog button {
    width: 66px;
    height: 19px;
    padding: 1px 0 0;
    border: 1px solid #bbb9bd;
    background: #d6d3d8;
    color: #57555b;
    font: inherit;
    line-height: 16px;
}
.dialog .dict {
    width: 89px;
    margin: 3px 0 0 4px;
    text-align: left;
    padding-left: 3px;
}
.dialog-buttons {
    display: flex;
    justify-content: flex-end;
    gap: 6px;
    padding: 5px 4px 0 0;
}
.dialog .ok {
    border: 2px solid #2f7dc2;
}

.cursor {
    position: absolute;
    left: 337px;
    top: 350px;
    width: 11px;
    height: 17px;
}

/* input method bar */
.ime-tip {
    position: absolute;
    left: 969px;
    top: 542px;
    width: 35px;
    height: 12px;
    border-radius: 2px;
    background: #dfe8f1;
    color: #56799a;
    font-size: 7px;
    line-height: 12px;
    text-align: center;
}
.ime-bar {
    position: absolute;
    left: 969px;
    top: 557px;
    width: 91px;
    height: 11px;
    display: flex;
    align-items: center;
    justify-content: space-between;
    background: #f0f2f7;
}
.ime-bar svg {
    width: 10px;
    height: 10px;
}
.ime-bar b {
    font-size: 9px;
    line-height: 11px;
    color: #3a7fd0;
}
.ime-shirt {
    fill: #3a7fd0;
}
```
FILE: script.js
```js
const hRuler = document.getElementById("hRuler");
const vRuler = document.getElementById("vRuler");

function addCell(ruler, text, name) {
    const cell = document.createElement("span");
    cell.textContent = text;
    if (name) cell.className = name;
    ruler.appendChild(cell);
}

// horizontal: 8..1, the margin, 1..47
for (let n = -8; n <= 47; n++) {
    addCell(hRuler, n === 0 ? "" : Math.abs(n));
}

// vertical: a tick between every two numbers
for (let n = -4; n <= 19; n++) {
    addCell(vRuler, n === 0 ? "" : Math.abs(n));
    addCell(vRuler, "", "tick");
}
```
